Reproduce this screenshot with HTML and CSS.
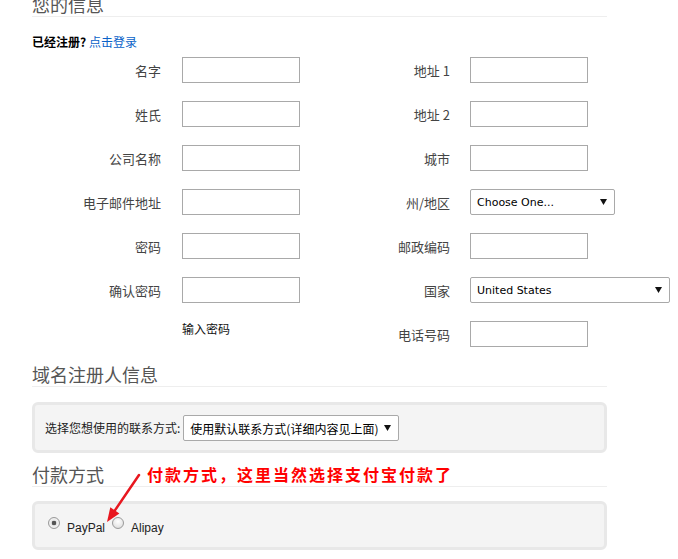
FILE: index.html
```html
<!DOCTYPE html>
<html lang="zh-CN">
<head>
<meta charset="utf-8">
<title>您的信息</title>
<link rel="stylesheet" href="styles.css">
</head>
<body>
<div class="page">
  <h2 class="sec-title sec-first">您的信息</h2>
  <p class="login"><b>已经注册?</b> <a href="#" class="login-link">点击登录</a></p>

  <div class="form-cols">
    <div class="col col-left">
      <div class="row"><label class="lbl">名字</label><input class="txt" type="text"></div>
      <div class="row"><label class="lbl">姓氏</label><input class="txt" type="text"></div>
      <div class="row"><label class="lbl">公司名称</label><input class="txt" type="text"></div>
      <div class="row"><label class="lbl">电子邮件地址</label><input class="txt" type="text"></div>
      <div class="row"><label class="lbl">密码</label><input class="txt" type="password"></div>
      <div class="row"><label class="lbl">确认密码</label><input class="txt" type="password"></div>
      <div class="row row-hint"><span class="lbl"></span><span class="hint">输入密码</span></div>
    </div>
    <div class="col col-right">
      <div class="row"><label class="lbl">地址 1</label><input class="txt" type="text"></div>
      <div class="row"><label class="lbl">地址 2</label><input class="txt" type="text"></div>
      <div class="row"><label class="lbl">城市</label><input class="txt" type="text"></div>
      <div class="row"><label class="lbl">州/地区</label>
        <div class="sel sel-state"><span>Choose One...</span><svg class="caret" width="7" height="6" viewBox="0 0 7 6"><polygon points="0,0 7,0 3.5,6" fill="#111"/></svg></div>
      </div>
      <div class="row"><label class="lbl">邮政编码</label><input class="txt" type="text"></div>
      <div class="row"><label class="lbl">国家</label>
        <div class="sel sel-country"><span>United States</span><svg class="caret" width="7" height="6" viewBox="0 0 7 6"><polygon points="0,0 7,0 3.5,6" fill="#111"/></svg></div>
      </div>
      <div class="row"><label class="lbl">电话号码</label><input class="txt" type="text"></div>
    </div>
  </div>

  <h2 class="sec-title sec-reg">域名注册人信息</h2>
  <div class="panel panel-reg">
    <span class="reg-label">选择您想使用的联系方式:</span>
    <div class="sel sel-contact"><span>使用默认联系方式(详细内容见上面)</span><svg class="caret" width="7" height="6" viewBox="0 0 7 6"><polygon points="0,0 7,0 3.5,6" fill="#111"/></svg></div>
  </div>

  <div class="pay">
    <h2 class="sec-title sec-pay">付款方式</h2>
    <span class="note">付款方式，这里当然选择支付宝付款了</span>
    <svg class="arrow" width="150" height="70" viewBox="0 0 150 70">
      <line x1="107" y1="11" x2="82.9" y2="46.4" stroke="#e8171f" stroke-width="2.5" stroke-linecap="round"/>
      <polygon points="75,58 87.4,49.5 78.3,43.3" fill="#e8171f"/>
    </svg>
    <div class="panel panel-pay">
      <span class="radio radio-on"></span><span class="opt">PayPal</span>
      <span class="radio radio-2"></span><span class="opt">Alipay</span>
    </div>
  </div>
</div>
</body>
</html>
```

FILE: styles.css
```css
html, body {
  margin: 0;
  padding: 0;
  background: #fff;
}

body {
  font-family: "Noto Sans CJK SC", "Noto Sans", sans-serif;
  color: #333;
  overflow: hidden;
}

.page {
  width: 575px;
  padding-left: 32px;
}

.sec-title {
  margin: 0;
  font-size: 18px;
  font-weight: 400;
  line-height: 20px;
  color: #555;
  padding-bottom: 2px;
  border-bottom: 1px solid #eeeeee;
}

.sec-first {
  margin-top: -6px;
}

.login {
  margin: 17px 0 0;
  font-size: 12px;
  line-height: 16px;
  color: #000;
}

.login b {
  font-weight: 700;
}

.login-link {
  color: #0a62c8;
  text-decoration: none;
}

.form-cols {
  display: flex;
  margin-top: 7px;
}

.col {
  display: flex;
  flex-direction: column;
  gap: 18px;
  flex: none;
}

.col-left {
  width: 288px;
}

.row {
  display: flex;
  align-items: center;
  height: 26px;
}

.lbl {
  font-size: 13px;
  color: #444;
  text-align: right;
  white-space: nowrap;
}

.col-left .lbl {
  width: 129px;
  margin-right: 21px;
}

.col-right .lbl {
  width: 130px;
  margin-right: 20px;
}

.txt {
  box-sizing: border-box;
  width: 118px;
  height: 26px;
  margin: 0;
  padding: 0 4px;
  border: 1px solid #a9a9a9;
  background: #fff;
  outline: none;
}

.row-hint {
  align-items: flex-start;
}

.hint {
  font-size: 12px;
  line-height: 16px;
  color: #111;
}

.sel {
  box-sizing: border-box;
  height: 26px;
  border: 1px solid #a9a9a9;
  border-radius: 2px;
  background: #fff;
  display: flex;
  align-items: center;
  justify-content: space-between;
  padding: 0 7px 0 6px;
  font-family: "DejaVu Sans", "Noto Sans CJK SC", sans-serif;
  font-size: 11px;
  color: #000;
  white-space: nowrap;
}

.sel-state {
  width: 145px;
}

.sel-country {
  width: 200px;
}

.caret {
  display: block;
  flex: none;
}

.sec-reg {
  margin-top: 17px;
}

.panel {
  box-sizing: border-box;
  width: 575px;
  border: 3px solid #e8e8e8;
  border-radius: 6px;
  background: #f4f4f4;
}

.panel-reg {
  margin-top: 15px;
  height: 51px;
  padding: 10px 10px 0;
  display: flex;
  align-items: center;
  align-content: flex-start;
  flex-wrap: wrap;
}

.reg-label {
  font-size: 12px;
  line-height: 26px;
  color: #222;
  margin-right: 3px;
}

.sel-contact {
  width: 216px;
  font-family: "Noto Sans CJK SC", sans-serif;
  font-size: 12px;
  padding: 0 7px 0 6px;
}

.pay {
  position: relative;
  margin-top: 11px;
}

.note {
  position: absolute;
  left: 115px;
  top: 0;
  font-size: 16px;
  line-height: 20px;
  font-weight: 700;
  letter-spacing: 2px;
  color: #f00;
  white-space: nowrap;
}

.arrow {
  position: absolute;
  left: 0;
  top: 0;
  overflow: visible;
}

.panel-pay {
  margin-top: 14px;
  height: 49px;
  padding: 13px 0 0 13px;
  display: flex;
  align-items: flex-start;
  font-family: "Liberation Sans", Arial, sans-serif;
  font-size: 12px;
  color: #222;
}

.radio {
  box-sizing: border-box;
  width: 12px;
  height: 12px;
  border-radius: 50%;
  border: 1px solid #9a9a9a;
  background: radial-gradient(circle at 50% 35%, #ffffff 0%, #e8e8e8 60%, #cfcfcf 100%);
  flex: none;
}

.radio-on {
  background: radial-gradient(circle, #555 0, #555 2px, #e4e4e4 2.6px, #f2f2f2 60%, #d0d0d0 100%);
}

.radio-2 {
  margin-left: 7px;
}

.opt {
  margin-left: 7px;
  margin-top: 4px;
  line-height: 14px;
}
```
